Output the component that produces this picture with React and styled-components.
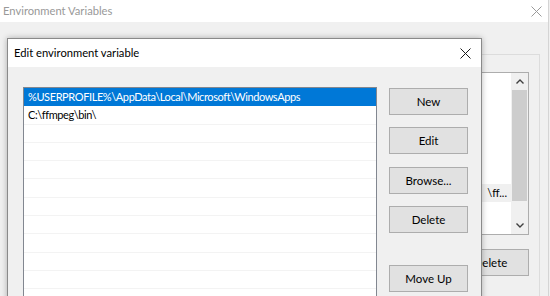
import React from 'react';
import styled, { createGlobalStyle } from 'styled-components';

const GlobalStyle = createGlobalStyle`
  html, body {
    margin: 0;
    padding: 0;
    overflow: hidden;
    background: #f0f0f0;
  }
  body {
    font-family: Lato, "Noto Sans", sans-serif;
    font-size: 11px;
  }
`;

const Desktop = styled.div`
  position: relative;
  width: 550px;
  height: 296px;
  overflow: hidden;
  background: #f0f0f0;
`;

const BackWindow = styled.div`
  width: 548px;
  height: 296px;
  border-right: 1px solid #d4d4d4;
  display: flex;
  flex-direction: column;
`;

const TitleBar = styled.div`
  display: flex;
  align-items: center;
  justify-content: space-between;
  height: ${(p) => p.$height}px;
  padding: 0 ${(p) => p.$padRight}px 0 ${(p) => p.$padLeft}px;
  background: #ffffff;
  flex-shrink: 0;
`;

const TitleText = styled.span`
  font-size: 11.2px;
  color: ${(p) => (p.$active ? '#000000' : '#999999')};
  line-height: 1;
`;

const CloseIcon = ({ color }) => (
  <svg width="11" height="11" viewBox="0 0 11 11">
    <path d="M0.5 0.5 L10.5 10.5 M10.5 0.5 L0.5 10.5" stroke={color} strokeWidth="1" fill="none" />
  </svg>
);

const BackBody = styled.div`
  flex: 1;
  display: flex;
  justify-content: flex-end;
  padding: 32px 8px 0 0;
`;

const GroupBox = styled.div`
  width: 240px;
  height: 260px;
  border: 1px solid #dcdcdc;
  padding: 17px 10px 0 0;
  display: flex;
  flex-direction: column;
  align-items: flex-end;
`;

const BackList = styled.div`
  width: 230px;
  height: 161px;
  border: 1px solid #adadad;
  background: #ffffff;
  display: flex;
`;

const BackRows = styled.div`
  flex: 1;
  min-width: 0;
  padding-top: 111px;
`;

const BackRow = styled.div`
  height: 18px;
  background: #f0f0f0;
  line-height: 18px;
  color: #000;
  text-align: right;
  padding-right: 4px;
  white-space: nowrap;
  overflow: hidden;
`;

const ScrollBar = styled.div`
  width: 17px;
  background: #f0f0f0;
  display: flex;
  flex-direction: column;
  align-items: center;
`;

const ScrollArrow = styled.div`
  height: 17px;
  display: flex;
  align-items: center;
  justify-content: center;
`;

const ScrollThumb = styled.div`
  width: 15px;
  height: 111px;
  background: #cdcdcd;
`;

const ScrollSpace = styled.div`
  flex: 1;
`;

const Chevron = ({ up }) => (
  <svg width="8" height="5" viewBox="0 0 8 5">
    <path
      d={up ? 'M0.5 4.5 L4 1 L7.5 4.5' : 'M0.5 0.5 L4 4 L7.5 0.5'}
      stroke="#404040"
      strokeWidth="1.4"
      fill="none"
    />
  </svg>
);

const Button = styled.div`
  box-sizing: border-box;
  width: ${(p) => p.$width || 79}px;
  height: 27px;
  background: #e1e1e1;
  border: 1px solid #adadad;
  display: flex;
  align-items: center;
  justify-content: center;
  font-size: 11.5px;
  color: #000;
  flex-shrink: 0;
  margin-top: ${(p) => p.$gap || 0}px;
`;

const Dialog = styled.div`
  position: absolute;
  left: 7px;
  top: 38px;
  width: 473px;
  height: 300px;
  border: 1px solid #8a8a8a;
  box-shadow: 0 0 6px rgba(0, 0, 0, 0.28);
  background: #f0f0f0;
  display: flex;
  flex-direction: column;
`;

const DialogBody = styled.div`
  flex: 1;
  display: flex;
  gap: 12px;
  padding: 20px 0 0 15px;
`;

const PathList = styled.div`
  width: 352px;
  height: 240px;
  border: 1px solid #828790;
  background: #ffffff;
`;

const PathRow = styled.div`
  box-sizing: border-box;
  height: 18.3px;
  padding-left: 4px;
  font-size: 11px;
  letter-spacing: -0.4px;
  line-height: 18px;
  white-space: nowrap;
  color: ${(p) => (p.$selected ? '#ffffff' : '#000000')};
  background: ${(p) => (p.$selected ? '#0078d7' : '#ffffff')};
  border-bottom: 1px solid ${(p) => (p.$selected ? '#0078d7' : '#f3f3f3')};
`;

const ButtonColumn = styled.div`
  display: flex;
  flex-direction: column;
  padding-top: 1px;
`;

const paths = [
  '%USERPROFILE%\\AppData\\Local\\Microsoft\\WindowsApps',
  'C:\\ffmpeg\\bin\\',
  '', '', '', '', '', '', '', '', '', '', '',
];

export default function App() {
  return (
    <>
      <GlobalStyle />
      <Desktop>
        <BackWindow>
          <TitleBar $height={22} $padLeft={3} $padRight={6}>
            <TitleText>Environment Variables</TitleText>
            <CloseIcon color="#9a9a9a" />
          </TitleBar>
          <BackBody>
            <GroupBox>
              <BackList>
                <BackRows>
                  <BackRow>\ff...</BackRow>
                </BackRows>
                <ScrollBar>
                  <ScrollArrow><Chevron up /></ScrollArrow>
                  <ScrollThumb />
                  <ScrollSpace />
                  <ScrollArrow><Chevron /></ScrollArrow>
                </ScrollBar>
              </BackList>
              <Button $width={77} $gap={14}>Delete</Button>
            </GroupBox>
          </BackBody>
        </BackWindow>

        <Dialog>
          <TitleBar $height={28} $padLeft={6} $padRight={10}>
            <TitleText $active>Edit environment variable</TitleText>
            <CloseIcon color="#1a1a1a" />
          </TitleBar>
          <DialogBody>
            <PathList>
              {paths.map((p, i) => (
                <PathRow key={i} $selected={i === 0}>{p}</PathRow>
              ))}
            </PathList>
            <ButtonColumn>
              <Button>New</Button>
              <Button $gap={12}>Edit</Button>
              <Button $gap={13}>Browse...</Button>
              <Button $gap={12}>Delete</Button>
              <Button $gap={32}>Move Up</Button>
            </ButtonColumn>
          </DialogBody>
        </Dialog>
      </Desktop>
    </>
  );
}
